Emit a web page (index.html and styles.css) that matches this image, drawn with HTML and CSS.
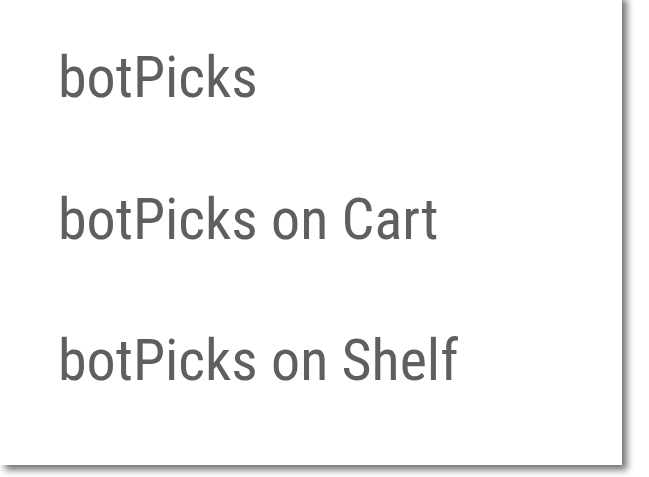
FILE: index.html
```html
<!DOCTYPE html>
<html>
<head><link rel="stylesheet" href="styles.css"></head>
<body>
<div class="menu">
  <div class="item">botPicks</div>
  <div class="item">botPicks on Cart</div>
  <div class="item">botPicks on Shelf</div>
</div>
</body>
</html>
```
FILE: styles.css
```css
html, body { margin: 0; padding: 0; background: #fff; }
body { width: 649px; height: 477px; overflow: hidden; }
.menu {
  width: 622px;
  margin-top: -6px;
  padding-top: 13px;
  height: 471px;
  background: #fff;
  box-shadow: 5px 5px 7px rgba(0,0,0,0.55);
  box-sizing: border-box;
}
.item {
  font-family: "Roboto Condensed", Roboto, sans-serif;
  font-size: 58px;
  color: #5f5f5f;
  padding-left: 58px;
  height: 141.5px;
  line-height: 141.5px;
  white-space: nowrap;
}
```
